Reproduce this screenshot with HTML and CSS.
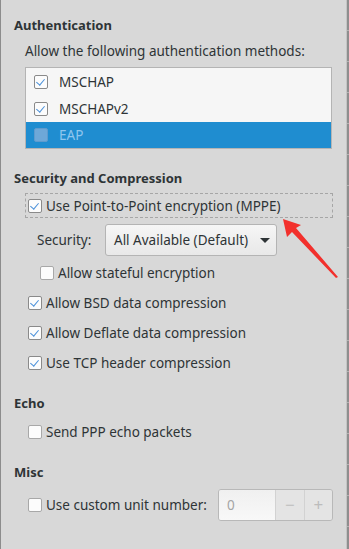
FILE: index.html
```html
<!DOCTYPE html>
<html lang="en">
<head>
  <meta charset="UTF-8" />
  <title>PPP Settings</title>
  <link rel="stylesheet" href="styles.css">
</head>
<body>
  <div class="window">
    <div class="dialog">
      <div class="section-title">Authentication</div>
      <div class="section-body">
        <div class="hint">Allow the following authentication methods:</div>
        <div class="method-list">
          <div class="method-row">
            <span class="check checked"></span>
            <span>MSCHAP</span>
          </div>
          <div class="method-row">
            <span class="check checked"></span>
            <span>MSCHAPv2</span>
          </div>
          <div class="method-row selected">
            <span class="check"></span>
            <span>EAP</span>
          </div>
        </div>
      </div>

      <div class="section-title title-security">Security and Compression</div>
      <div class="section-body">
        <div class="check-row focused">
          <span class="check checked"></span>
          <span>Use Point-to-Point encryption (MPPE)</span>
        </div>
        <div class="security-row">
          <span class="security-label">Security:</span>
          <div class="combo">
            <span>All Available (Default)</span>
            <span class="combo-arrow"></span>
          </div>
        </div>
        <div class="check-row sub">
          <span class="check"></span>
          <span>Allow stateful encryption</span>
        </div>
        <div class="check-row">
          <span class="check checked"></span>
          <span>Allow BSD data compression</span>
        </div>
        <div class="check-row">
          <span class="check checked"></span>
          <span>Allow Deflate data compression</span>
        </div>
        <div class="check-row">
          <span class="check checked"></span>
          <span>Use TCP header compression</span>
        </div>
      </div>

      <div class="section-title title-echo">Echo</div>
      <div class="section-body">
        <div class="check-row echo-row">
          <span class="check"></span>
          <span>Send PPP echo packets</span>
        </div>
      </div>

      <div class="section-title title-misc">Misc</div>
      <div class="section-body">
        <div class="unit-row">
          <span class="check"></span>
          <span class="unit-label">Use custom unit number:</span>
          <div class="spin">
            <span class="spin-entry">0</span>
            <span class="spin-btn">&minus;</span>
            <span class="spin-btn">+</span>
          </div>
        </div>
      </div>
    </div>
    <div class="edge"></div>

    <!-- red annotation arrow drawn over the dialog -->
    <svg class="annotation" width="349" height="549" viewBox="0 0 349 549">
      <polygon points="283,219 287,237 292,232 336,278 338,277 296,228 301,225" fill="#f2302c" />
    </svg>
  </div>
</body>
</html>
```

FILE: styles.css
```css
* {
  margin: 0;
  padding: 0;
  box-sizing: border-box;
}

body {
  font-family: 'Noto Sans', 'Open Sans', sans-serif;
  font-size: 13.5px;
  color: #2e3436;
  background-color: #d6d6d6;
}

.window {
  position: relative;
  display: flex;
  width: 349px;
  height: 549px;
  overflow: hidden;
}

.dialog {
  flex: 1;
  background-color: #d8d8d8;
  border-left: 1px solid #8c8c8c;
  padding: 15px 13px 0 13px;
  white-space: nowrap;
}

.edge {
  width: 5px;
  background: repeating-linear-gradient(180deg, #8e8e8e 0, #8e8e8e 30px, #b2b2b2 30px, #b2b2b2 31px);
  border-left: 1px solid #c4c4c4;
}

.section-title {
  font-weight: 700;
  font-size: 13px;
  line-height: 20px;
  height: 20px;
}

.title-security {
  margin-top: 19px;
}

.title-echo,
.title-misc {
  margin-top: 15px;
}

.section-body {
  padding-left: 11px;
}

.hint {
  margin-top: 6px;
  line-height: 20px;
}

.method-list {
  margin-top: 6px;
  width: 307px;
  border: 1px solid #b4b4b4;
  background-color: #f6f6f6;
}

.method-row {
  display: flex;
  align-items: center;
  gap: 11px;
  height: 27px;
  padding-left: 8px;
}

.method-row.selected {
  background-color: #1f8dd0;
  color: #8fc6ee;
  height: 26px;
}

.method-row.selected .check {
  background-color: #6ea8d8;
  border-color: #5f9bcd;
}

.check {
  display: inline-block;
  width: 14px;
  height: 14px;
  border: 1px solid #a8a8a8;
  border-radius: 2px;
  background-color: #fcfcfc;
  flex-shrink: 0;
  position: relative;
}

.check.checked {
  border-color: #8a8a8a;
}

.check.checked::after {
  content: "";
  position: absolute;
  left: 3px;
  top: 1px;
  width: 4px;
  height: 7px;
  border-right: 1.5px solid #4a90d9;
  border-bottom: 1.5px solid #4a90d9;
  transform: rotate(40deg);
}

.check-row {
  display: flex;
  align-items: center;
  gap: 4px;
  height: 30px;
  padding-left: 3px;
}

.check-row.focused {
  margin-top: 5px;
  height: 25px;
  width: 308px;
  border: 1px dashed #a6a6a6;
  padding-left: 2px;
}

.check-row.sub {
  margin-top: 2px;
  padding-left: 15px;
}

.check-row.echo-row {
  margin-top: 4px;
}

.security-row {
  display: flex;
  align-items: center;
  margin-top: 6px;
  height: 32px;
  padding-left: 12px;
}

.security-label {
  width: 68px;
}

.combo {
  display: flex;
  align-items: center;
  justify-content: space-between;
  width: 172px;
  height: 32px;
  padding: 0 6px 0 8px;
  border: 1px solid #b4b4b4;
  border-radius: 3px;
  background: linear-gradient(180deg, #f6f6f6, #e8e8e8);
}

.combo-arrow {
  width: 0;
  height: 0;
  border-left: 5px solid transparent;
  border-right: 5px solid transparent;
  border-top: 5px solid #2e3436;
}

.unit-row {
  display: flex;
  align-items: center;
  gap: 4px;
  margin-top: 7px;
  height: 32px;
  padding-left: 3px;
}

.unit-label {
  flex-shrink: 0;
}

.spin {
  display: flex;
  flex-shrink: 0;
  margin-left: auto;
  width: 115px;
  height: 32px;
  border: 1px solid #b8b8b8;
  border-radius: 3px;
  overflow: hidden;
}

.spin-entry {
  width: 57px;
  padding-left: 8px;
  line-height: 30px;
  color: #a4a4a4;
  background: linear-gradient(180deg, #f0f0f0, #f8f8f8);
}

.spin-btn {
  width: 29px;
  text-align: center;
  line-height: 30px;
  font-size: 17px;
  color: #bcbcbc;
  background-color: #e4e4e4;
  border-left: 1px solid #d2d2d2;
}

.annotation {
  position: absolute;
  left: 0;
  top: 0;
  pointer-events: none;
}
```
